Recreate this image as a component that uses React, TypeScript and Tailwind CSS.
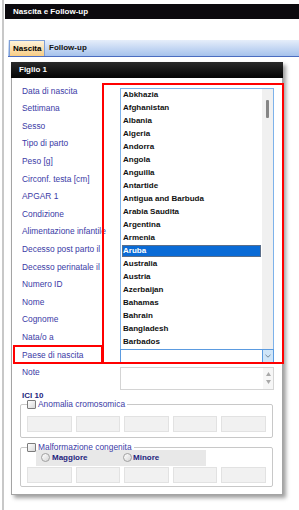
const countries = [
  "Abkhazia",
  "Afghanistan",
  "Albania",
  "Algeria",
  "Andorra",
  "Angola",
  "Anguilla",
  "Antartide",
  "Antigua and Barbuda",
  "Arabia Saudita",
  "Argentina",
  "Armenia",
  "Aruba",
  "Australia",
  "Austria",
  "Azerbaijan",
  "Bahamas",
  "Bahrain",
  "Bangladesh",
  "Barbados",
];

const labels = [
  "Data di nascita",
  "Settimana",
  "Sesso",
  "Tipo di parto",
  "Peso [g]",
  "Circonf. testa [cm]",
  "APGAR 1",
  "Condizione",
  "Alimentazione infantile",
  "Decesso post parto il",
  "Decesso perinatale il",
  "Numero ID",
  "Nome",
  "Cognome",
  "Nata/o a",
];

function Checkbox() {
  return (
    <span className="inline-block h-[9px] w-[9px] shrink-0 rounded-[1px] border border-[#7c7c7c] bg-gradient-to-br from-[#ffffff] to-[#d8d8d8]" />
  );
}

function Radio() {
  return (
    <span className="inline-block h-[9px] w-[9px] shrink-0 rounded-full border border-[#a0a0a0] bg-gradient-to-br from-[#ffffff] to-[#d6d6d6]" />
  );
}

function Boxes() {
  return (
    <div className="flex gap-[4px]">
      {[0, 1, 2, 3, 4].map((i) => (
        <div key={i} className="h-[16px] flex-1 border border-[#e2e2e2] bg-[#f1f1f1]" />
      ))}
    </div>
  );
}

function Label({ text }: { text: string }) {
  return (
    <div className="flex h-[17.6px] w-[108px] shrink-0 items-center whitespace-nowrap pl-[10px] text-[8.4px] text-[#3b3ba6]">
      {text}
    </div>
  );
}

export default function App() {
  return (
    <div className="relative h-[510px] w-[299px] overflow-hidden bg-white font-['Liberation_Sans',Arial,sans-serif] text-[8px]">
      <div className="ml-[2px] h-full border-l-2 border-[#c8c8c8] pt-[4px]">
        {/* title bar */}
        <div className="ml-[1px] h-[15px] bg-[#0c0a0e] pl-[8px] text-[8px] font-bold leading-[15px] text-white">
          Nascita e Follow-up
        </div>

        {/* tab bar */}
        <div className="ml-[4px] mt-[21px] flex h-[17px] items-end border-b border-[#4a6cc0] bg-gradient-to-b from-[#e6eefa] to-[#a6c2ec]">
          <div className="ml-[1px] flex h-[16px] w-[36px] items-center border border-b-0 border-[#7f9fd6] bg-gradient-to-b from-[#fff3da] to-[#f8cd84] pl-[3px] font-bold text-black">
            Nascita
          </div>
          <div className="flex h-[16px] items-center pl-[4px] font-bold text-[#111]">Follow-up</div>
        </div>

        {/* panel */}
        <div className="ml-[7px] mt-[5px] w-[272px] shadow-[3px_3px_4px_rgba(0,0,0,0.38)]">
          <div className="h-[16px] bg-gradient-to-b from-[#2a2a2a] to-[#050505] pl-[8px] text-[8px] font-bold leading-[16px] text-white">
            Figlio 1
          </div>
          <div className="border-x border-b border-[#a4a4a4] bg-white pb-[7px] pt-[4.2px]">
            {labels.map((l) => (
              <div key={l} className="flex h-[17.6px]">
                <Label text={l} />
              </div>
            ))}

            {/* Paese di nascita row with open select */}
            <div className="flex h-[17.6px]">
              <Label text="Paese di nascita" />
              <div className="relative mt-[2.6px] h-[14px] w-[154px]">
                {/* open list */}
                <div className="absolute bottom-full left-0 flex h-[261px] w-full border border-b-0 border-[#7db2ea] bg-white">
                  <div className="flex-1 pl-[1px] pt-[0px]">
                    {countries.map((c) =>
                      c === "Aruba" ? (
                        <div
                          key={c}
                          className="flex h-[13px] items-center"
                        >
                          <div className="mr-[1px] flex h-[12px] flex-1 items-center border border-[#5a6e8a] bg-[#0a6bd6] pl-[0px] font-bold text-white">
                            {c}
                          </div>
                        </div>
                      ) : (
                        <div key={c} className="flex h-[13px] items-center pl-[1px] font-bold text-[#111]">
                          {c}
                        </div>
                      )
                    )}
                  </div>
                  <div className="w-[11px] bg-[#f0f0f0] pt-[11px]">
                    <div className="ml-[4px] h-[18px] w-[2.5px] rounded-[1px] bg-[#858585]" />
                  </div>
                </div>
                {/* select box */}
                <div className="flex h-full w-full border border-b-[1.5px] border-[#5b9be0] border-b-[#2f6cc8] bg-white">
                  <div className="flex-1" />
                  <div className="flex w-[11px] items-center justify-center border-l border-[#5b9be0] bg-[#cfe5f8]">
                    <svg width="6" height="4" viewBox="0 0 6 4">
                      <polyline points="0.5,0.8 3,3.2 5.5,0.8" fill="none" stroke="#6a7c90" strokeWidth="0.9" />
                    </svg>
                  </div>
                </div>
              </div>
            </div>

            {/* Note row */}
            <div className="flex h-[27px]">
              <Label text="Note" />
              <div className="mt-[3px] flex h-[23px] w-[154px] justify-end border border-[#d4d4d4] bg-white">
                <div className="flex w-[10px] flex-col items-center justify-center gap-[4px] bg-[#f6f6f6]">
                  <svg width="5" height="4" viewBox="0 0 5 4">
                    <polygon points="2.5,0 5,4 0,4" fill="#a8a8a8" />
                  </svg>
                  <svg width="5" height="4" viewBox="0 0 5 4">
                    <polygon points="0,0 5,0 2.5,4" fill="#a8a8a8" />
                  </svg>
                </div>
              </div>
            </div>

            {/* ICI 10 */}
            <div className="h-[9px] pl-[10px] text-[8px] font-bold leading-[9px] text-[#1e1e7e]">ICI 10</div>

            {/* Anomalia cromosomica */}
            <fieldset className="ml-[8px] mr-[9px] rounded-[2px] border border-[#c8c8c8] px-[6px] pb-[5px]">
              <legend className="ml-[0px] flex h-[10px] items-center gap-[2px] pr-[2px] text-[8.4px] text-[#3b3ba6]">
                <Checkbox />
                <span>Anomalia cromosomica</span>
              </legend>
              <div className="mt-[6px]">
                <Boxes />
              </div>
            </fieldset>

            {/* Malformazione congenita */}
            <fieldset className="ml-[8px] mr-[9px] mt-[5px] rounded-[2px] border border-[#c8c8c8] px-[6px] pb-[3px]">
              <legend className="ml-[0px] flex h-[10px] items-center gap-[2px] pr-[2px] text-[8.4px] text-[#3b3ba6]">
                <Checkbox />
                <span>Malformazione congenita</span>
              </legend>
              <div className="-mt-[3px] ml-[9px] flex h-[16px] w-[170px] items-center bg-[#e8e8e8] pl-[5px] font-bold text-[#1e1e7e]">
                <div className="flex w-[82px] items-center gap-[2px]">
                  <Radio />
                  <span>Maggiore</span>
                </div>
                <div className="flex items-center gap-[1px]">
                  <Radio />
                  <span>Minore</span>
                </div>
              </div>
              <div className="mt-[1.5px]">
                <Boxes />
              </div>
            </fieldset>
          </div>
        </div>
      </div>

      {/* red annotation boxes */}
      <div className="pointer-events-none absolute left-[13px] top-[345px] h-[19px] w-[90px] border-2 border-[#ff0000]" />
      <div className="pointer-events-none absolute left-[102px] top-[83px] h-[281px] w-[182px] border-2 border-[#ff0000]" />
    </div>
  );
}
